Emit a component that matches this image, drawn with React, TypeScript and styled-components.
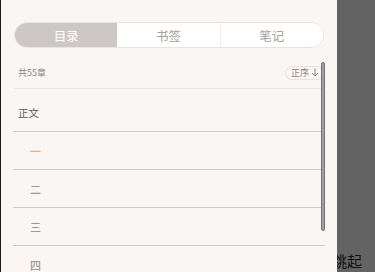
import React from "react";
import styled, { createGlobalStyle } from "styled-components";

const Global = createGlobalStyle`
  html, body { margin: 0; padding: 0; }
  body {
    width: 375px;
    height: 272px;
    overflow: hidden;
    background: #636363;
    font-family: "Noto Sans CJK SC", "Noto Sans", sans-serif;
  }
`;

const Stage = styled.div`
  position: relative;
  width: 375px;
  height: 272px;
  overflow: hidden;
`;

const Reader = styled.div`
  height: 272px;
  display: flex;
  flex-direction: column;
  justify-content: flex-end;
  box-sizing: border-box;
  padding: 0 13px 1px 0;
  text-align: right;
  color: #111;
  font-size: 15px;
  line-height: 20px;
`;

const Drawer = styled.aside`
  position: absolute;
  left: 0;
  top: 0;
  width: 337px;
  height: 272px;
  box-sizing: border-box;
  border-left: 1px solid #1c1c1c;
  background: #faf6f3;
  padding: 22px 12px 0 12px;
  overflow: hidden;
  display: flex;
  flex-direction: column;
  & > * { flex-shrink: 0; }
`;

const Tabs = styled.div`
  display: flex;
  height: 26px;
  margin: 0 1px;
  box-sizing: border-box;
  border: 1px solid #e8e4e0;
  border-radius: 13px;
  overflow: hidden;
  background: #fff;
`;

const Tab = styled.div<{ $active?: boolean; $divider?: boolean }>`
  flex: 1;
  display: flex;
  align-items: center;
  justify-content: center;
  font-size: 12.5px;
  color: ${(p) => (p.$active ? "#ffffff" : "#a59f9b")};
  background: ${(p) => (p.$active ? "#cdc8c5" : "#ffffff")};
  border-left: ${(p) => (p.$divider ? "1px solid #f1ede9" : "none")};
`;

const Header = styled.div`
  display: flex;
  align-items: center;
  justify-content: space-between;
  height: 32px;
  margin-top: 9px;
  box-sizing: border-box;
  padding: 0 1px 0 5px;
  border-bottom: 1px solid #ece8e4;
`;

const Count = styled.span`
  font-size: 9px;
  color: #8c8683;
`;

const SortPill = styled.div`
  display: flex;
  align-items: center;
  gap: 2px;
  height: 14px;
  box-sizing: border-box;
  padding: 0 4px 0 5px;
  border: 1px solid #e6e1dd;
  border-radius: 7px;
  font-size: 9px;
  color: #8c8683;
`;

const Arrow = styled.svg`
  width: 8px;
  height: 9px;
`;

const VolumeRow = styled.div`
  height: 43px;
  display: flex;
  align-items: center;
  box-sizing: border-box;
  padding: 5px 0 0 5px;
  border-bottom: 1px solid #d1cbc7;
  font-size: 10.5px;
  color: #5a5a5a;
`;

const ChapterRow = styled.div<{ $current?: boolean }>`
  height: 38px;
  display: flex;
  align-items: center;
  box-sizing: border-box;
  padding-left: 17px;
  border-bottom: 1px solid #d1cbc7;
  font-size: 11px;
  font-weight: 500;
  color: ${(p) => (p.$current ? "#f2aa74" : "#9c9998")};
`;

const Thumb = styled.div`
  position: absolute;
  left: 320px;
  top: 62px;
  width: 4px;
  height: 169px;
  box-sizing: border-box;
  border: 1px solid #707070;
  border-radius: 2px;
  background: #a2a2a2;
`;

const chapters = ["一", "二", "三", "四"];

export default function App() {
  return (
    <>
      <Global />
      <Stage>
        <Reader>他猛地从床上跳起</Reader>
        <Drawer>
          <Tabs>
            <Tab $active>目录</Tab>
            <Tab>书签</Tab>
            <Tab $divider>笔记</Tab>
          </Tabs>
          <Header>
            <Count>共55章</Count>
            <SortPill>
              正序
              <Arrow viewBox="0 0 8 9">
                <path
                  d="M4 0.5 V8 M1 5 L4 8 L7 5"
                  fill="none"
                  stroke="#8c8683"
                  strokeWidth="1"
                />
              </Arrow>
            </SortPill>
          </Header>
          <VolumeRow>正文</VolumeRow>
          {chapters.map((c, i) => (
            <ChapterRow key={c} $current={i === 0}>
              {c}
            </ChapterRow>
          ))}
          <Thumb />
        </Drawer>
      </Stage>
    </>
  );
}
